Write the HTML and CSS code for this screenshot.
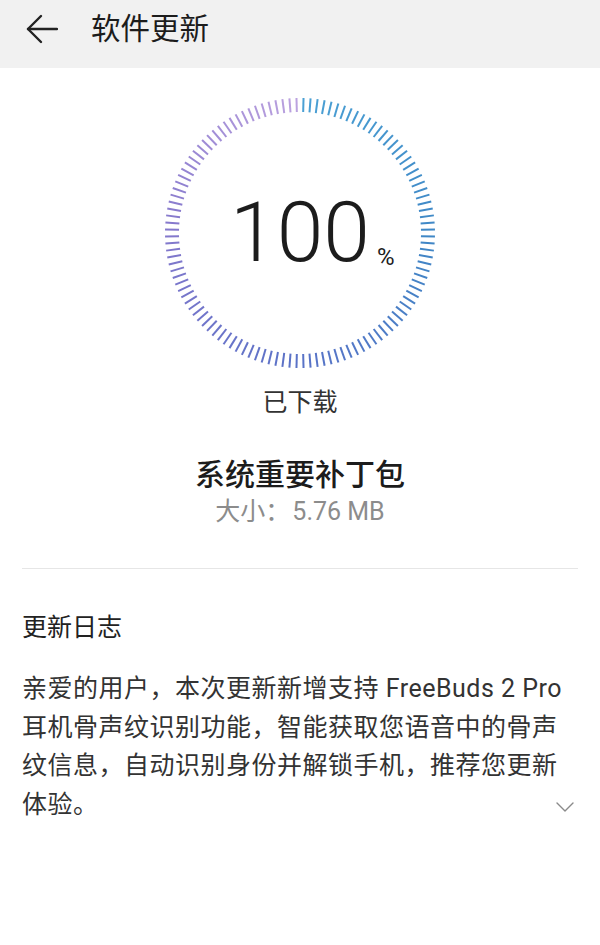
FILE: index.html
```html
<!DOCTYPE html>
<html lang="zh-CN">
<head>
  <meta charset="UTF-8" />
  <meta name="viewport" content="width=device-width, initial-scale=1.0"/>
  <title>软件更新</title>
  <link rel="stylesheet" href="styles.css">
</head>
<body>
  <header class="topbar">
    <svg class="back-icon" width="32" height="32" viewBox="0 0 32 32" fill="none" stroke="#222" stroke-width="2.4" stroke-linecap="round" stroke-linejoin="round">
      <path d="M2 16H31" />
      <path d="M15 3L2 16L15 29" />
    </svg>
    <h1 class="topbar-title">软件更新</h1>
  </header>

  <main class="content">
    <div class="progress">
      <svg id="ring" class="ring" width="280" height="280" viewBox="0 0 280 280"></svg>
      <div class="percent"><span class="percent-num">100<span class="percent-sign">%</span></span></div>
    </div>
    <p class="status">已下载</p>

    <h2 class="pkg-name">系统重要补丁包</h2>
    <p class="pkg-size">大小<span class="colon">：</span>5.76 MB</p>

    <hr class="divider">

    <section class="changelog">
      <h3 class="changelog-title">更新日志</h3>
      <p class="changelog-text">亲爱的用户，本次更新新增支持 FreeBuds 2 Pro 耳机骨声纹识别功能，智能获取您语音中的骨声纹信息，自动识别身份并解锁手机，推荐您更新体验。</p>
      <svg class="expand-icon" width="18" height="10" viewBox="0 0 18 10" fill="none" stroke="#8a8a8a" stroke-width="1.4" stroke-linecap="round" stroke-linejoin="round">
        <path d="M1 1L9 9L17 1" />
      </svg>
    </section>
  </main>

  <script>
    // 刻度环：120 条短线，颜色沿顺时针从蓝色渐变到淡紫色
    const ring = document.getElementById('ring');
    const stops = [
      [0, [74, 160, 212]],
      [0.25, [63, 135, 198]],
      [0.5, [90, 114, 199]],
      [0.75, [132, 120, 204]],
      [1, [189, 163, 224]]
    ];

    function colorAt(t) {
      for (let i = 1; i < stops.length; i++) {
        if (t <= stops[i][0]) {
          const [t0, c0] = stops[i - 1];
          const [t1, c1] = stops[i];
          const k = (t - t0) / (t1 - t0);
          const c = c0.map((v, j) => Math.round(v + (c1[j] - v) * k));
          return `rgb(${c[0]},${c[1]},${c[2]})`;
        }
      }
      return 'rgb(189,163,224)';
    }

    const count = 120;
    for (let i = 0; i < count; i++) {
      const a = (i + 0.5) / count * Math.PI * 2;
      const sin = Math.sin(a), cos = Math.cos(a);
      const line = document.createElementNS('http://www.w3.org/2000/svg', 'line');
      line.setAttribute('x1', (140 + sin * 121).toFixed(2));
      line.setAttribute('y1', (140 - cos * 121).toFixed(2));
      line.setAttribute('x2', (140 + sin * 135).toFixed(2));
      line.setAttribute('y2', (140 - cos * 135).toFixed(2));
      line.setAttribute('stroke', colorAt(i / count));
      line.setAttribute('stroke-width', '2');
      ring.appendChild(line);
    }
  </script>
</body>
</html>
```

FILE: styles.css
```css
body {
  margin: 0;
  padding: 0;
  background: #fff;
  font-family: 'Roboto', 'Noto Sans CJK SC', sans-serif;
  color: #222;
}

.topbar {
  height: 58px;
  padding-bottom: 10px;
  background: #f1f1f1;
  display: flex;
  align-items: center;
}

.back-icon {
  margin-left: 26px;
}

.topbar-title {
  margin: 0 0 0 33px;
  font-size: 29.5px;
  font-weight: 400;
  line-height: 40px;
  color: #1c1c1c;
}

.content {
  display: flex;
  flex-direction: column;
  align-items: center;
}

.progress {
  position: relative;
  width: 280px;
  height: 280px;
  margin-top: 25px;
}

.ring {
  display: block;
}

.percent {
  position: absolute;
  inset: 0;
  display: flex;
  align-items: center;
  justify-content: center;
}

.percent-num {
  position: relative;
  font-family: 'Roboto', sans-serif;
  font-weight: 300;
  font-size: 84px;
  line-height: 84px;
  color: #1c1c1c;
}

.percent-sign {
  position: absolute;
  left: 100%;
  bottom: 6.5px;
  margin-left: 7px;
  font-size: 24px;
  line-height: 24px;
  font-weight: 400;
}

.status {
  margin: 14px 0 0;
  font-size: 25px;
  line-height: 32px;
  color: #333;
}

.pkg-name {
  margin: 36px 0 0;
  font-size: 30px;
  line-height: 40px;
  font-weight: 500;
  color: #1c1c1c;
}

.pkg-size {
  height: 32px;
  margin: 1px 0 0;
  font-size: 25px;
  line-height: 32px;
  color: #8c8c8c;
}

.colon {
  font-family: 'Noto Sans CJK TC', sans-serif;
  line-height: 0;
  margin-right: 2px;
}

.divider {
  align-self: stretch;
  margin: 40px 22px 0;
  border: none;
  border-top: 1px solid #e6e6e6;
}

.changelog {
  position: relative;
  align-self: stretch;
  padding: 0 22px;
}

.changelog-title {
  margin: 43px 0 0;
  font-size: 25px;
  line-height: 32px;
  font-weight: 400;
  color: #222;
}

.changelog-text {
  margin: 26px 0 0;
  font-size: 25px;
  letter-spacing: 0.5px;
  line-height: 38.5px;
  color: #333;
}

.expand-icon {
  position: absolute;
  right: 26px;
  bottom: 12px;
}
```
